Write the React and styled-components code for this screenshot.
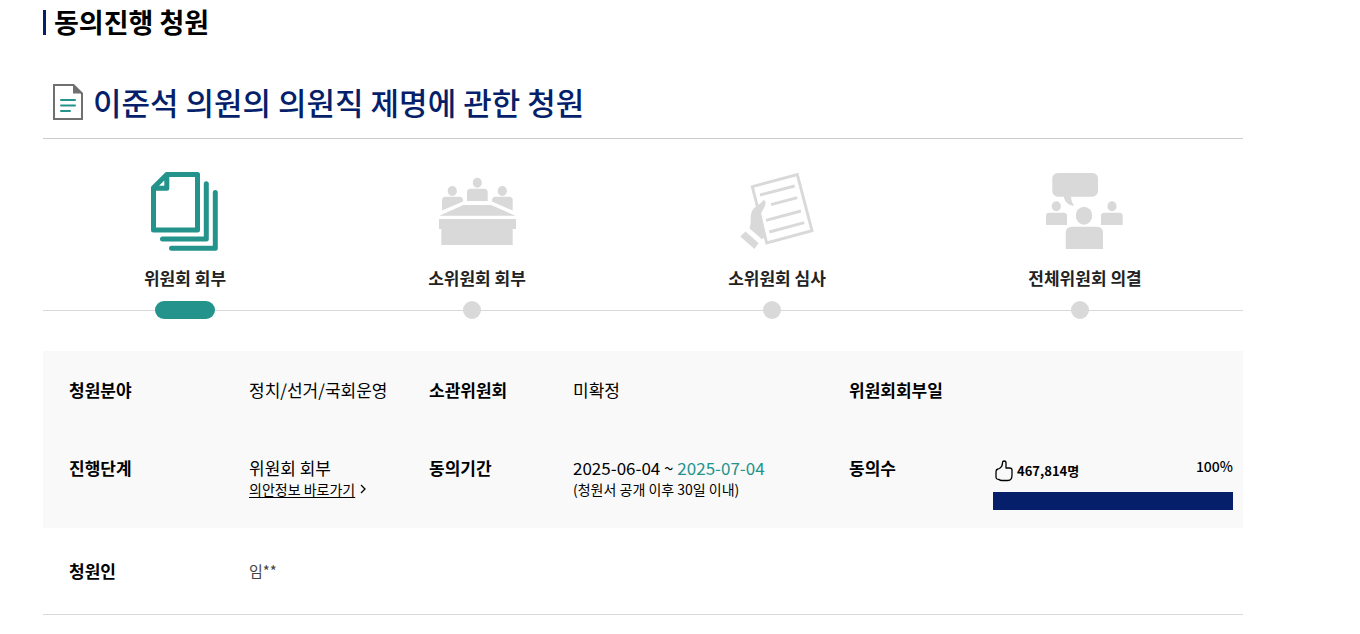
import styled, { createGlobalStyle, css } from "styled-components";

const GlobalStyle = createGlobalStyle`
    :root {
        --navy: #051f6b;
        --teal: #23938c;
        --gray: #d9d9d9;
        --panel: #f9f9f9;
    }

    * {
        box-sizing: border-box;
    }

    body {
        margin: 0;
        background-color: white;
        color: #000;
        font-family: "Noto Sans CJK KR", "Noto Sans", sans-serif;
        font-size: 17px;
        line-height: 24px;
    }
`

const Container = styled.main`
    max-width: 1200px;
    margin: 0 43px;
    padding-top: 4px;
`

const PageTitle = styled.h1`
    display: flex;
    align-items: center;
    gap: 8px;
    margin: 0;
    font-size: 27px;
    line-height: 36px;
    font-weight: 700;

    &::before {
        content: "";
        width: 3px;
        height: 25px;
        background-color: var(--navy);
    }
`

const PetitionTitle = styled.h2`
    display: flex;
    align-items: center;
    gap: 10px;
    margin: 0;
    padding: 39px 10px 13px;
    border-bottom: 1px solid #ccc;
    color: var(--navy);
    font-size: 31px;
    line-height: 46px;
    font-weight: 500;

    svg {
        flex: none;
    }
`

const Steps = styled.ol`
    display: grid;
    grid-template-columns: repeat(4, 1fr);
    margin: 0;
    padding: 32px 0 0;
    list-style: none;
    background: linear-gradient(var(--gray), var(--gray)) 0 100% / 100% 1px no-repeat;
`

const Step = styled.li`
    display: flex;
    flex-direction: column;
    align-items: center;
    padding-right: ${({ $edge }) => ($edge ? "16px" : "32px")};
    color: #222;
    font-weight: 700;

    svg {
        margin-bottom: 15px;
    }
`

const Marker = styled.span`
    width: 18px;
    height: 18px;
    margin: 11px 10px -8px 0;
    border-radius: 9px;
    background-color: var(--gray);

    ${({ $active }) => $active && css`
        width: 60px;
        margin-right: 0;
        background-color: var(--teal);
    `}
`

const InfoTable = styled.table`
    width: 100%;
    margin-top: 40px;
    border-collapse: collapse;
    table-layout: fixed;
`

const Col = styled.col`
    width: ${({ $width }) => $width};
`

const InfoRow = styled.tr`
    height: 78px;
    background-color: var(--panel);
    vertical-align: top;

    ${({ $plain }) => $plain && css`
        height: 86px;
        background-color: white;
        border-bottom: 1px solid var(--gray);
        vertical-align: middle;
    `}
`

const Label = styled.th`
    padding: 27px 10px 18px;
    text-align: left;
    vertical-align: inherit;
    font-weight: 700;

    &:first-child {
        padding-left: 26px;
    }

    ${InfoRow}:last-child & {
        padding-block: 18px;
    }
`

const Value = styled.td`
    padding: 27px 10px 18px;
    vertical-align: inherit;
    white-space: nowrap;
`

const Petitioner = styled(Value)`
    padding-block: 18px;
    color: #444;
    font-size: 15px;
`

const Note = styled.div`
    font-size: 14px;
    line-height: 18px;
`

const BillLink = styled.a`
    display: inline-flex;
    align-items: center;
    gap: 5px;
    color: inherit;
    text-decoration: none;

    span {
        text-decoration: underline;
        text-underline-offset: 2px;
    }
`

const Deadline = styled.span`
    color: var(--teal);
`

const CountRow = styled.div`
    display: flex;
    justify-content: space-between;
    font-size: 14px;
    line-height: 20px;
    font-weight: 500;
`

const Count = styled.strong`
    display: flex;
    align-items: center;
    gap: 4px;
    padding: 4px 0 0 2px;
    font-size: 13px;
    font-weight: 700;
`

const Bar = styled.div`
    height: 18px;
    margin-top: 10px;
    background-color: #e5e5e5;
`

const BarFill = styled.div`
    height: 100%;
    background-color: var(--navy);
`

const DocumentIcon = () => (
    <svg width="30" height="36" viewBox="0 0 30 36" fill="none" aria-hidden="true">
        <path d="M1 1H20.5L29 9.5V35H1Z" fill="white" stroke="#707070" strokeWidth="2" />
        <path d="M20 0L30 9.5H20Z" fill="#707070" />
        <path d="M8 16H22M8 21.5H22M8 27H17" stroke="#23938c" strokeWidth="2" strokeLinecap="round" />
    </svg>
)

const ReferIcon = () => (
    <svg width="80" height="80" viewBox="0 0 80 80" fill="none" stroke="#23938c" strokeWidth="5" strokeLinecap="round" strokeLinejoin="round" aria-hidden="true">
        <path d="M21.8 3.5H52.5V59H8.5V16.8ZM21.8 3.5V17.2H8.5" />
        <path d="M61.3 12.8V68H17.5M70.3 21.5V77.3H26.5" />
    </svg>
)

const SubcommitteeIcon = () => (
    <svg width="80" height="80" viewBox="0 0 80 80" fill="#d9d9d9" aria-hidden="true">
        <ellipse cx="40.3" cy="11.7" rx="4.5" ry="5" />
        <ellipse cx="15.3" cy="20" rx="4.6" ry="5" />
        <ellipse cx="65.3" cy="20" rx="4.6" ry="5" />
        <path d="M30 30V21.2Q30 17.7 33.5 17.7H47.2Q50.7 17.7 50.7 21.2V30Z" />
        <path d="M5 39.6V29.2Q5 25.7 8.5 25.7H22.5Q26 25.7 26 29.2V30.6Z" />
        <path d="M75.7 39.6V29.2Q75.7 25.7 72.2 25.7H58.5Q55 25.7 55 29.2V30.6Z" />
        <path d="M2.3 44.7L26.3 34H54L78.3 44.7Z" />
        <path d="M2 48H79V58H75.7V74H4.3V58H2Z" />
    </svg>
)

const ReviewIcon = () => (
    <svg width="80" height="80" viewBox="0 0 80 80" fill="none" stroke="#d9d9d9" strokeWidth="2.9" aria-hidden="true">
        <path d="M15.3 15.7L60.3 3.6L75 59.7L29.7 72Z" />
        <path d="M23 24L57.7 15M34 33.7L60.3 26.7M29 49.3L64 40M32.3 61L67.3 51.7" />
        <path d="M26.3 29.3C28.3 28.9 28.9 31.5 28.3 33.8C27.5 37 25 39.5 24.2 42.5L29 65L25 68.3L12.3 57.3C15 52 12.5 46 14.8 40.5C16.6 36.3 22.5 34 26.3 29.3Z" fill="#d9d9d9" stroke="none" />
        <path d="M8.5 60.5L21.5 72L17.5 78L3.3 65.5Z" fill="#d9d9d9" stroke="none" />
    </svg>
)

const PlenaryIcon = () => (
    <svg width="80" height="80" viewBox="0 0 80 80" fill="#d9d9d9" aria-hidden="true">
        <rect x="7.3" y="2" width="45.7" height="23.7" rx="5.5" />
        <path d="M18.7 25C19.5 31 23.5 34.7 29.3 34.7C27 32 26 29 26 25Z" />
        <ellipse cx="11.3" cy="35.3" rx="4.6" ry="5" />
        <ellipse cx="67" cy="35.3" rx="4.6" ry="5" />
        <path d="M1 54V45Q1 41.7 4.3 41.7H18.7Q22 41.7 22 45V54Z" />
        <path d="M56 54V45Q56 41.7 59.3 41.7H74.4Q77.7 41.7 77.7 45V54Z" />
        <ellipse cx="39" cy="44.7" rx="8.2" ry="9" />
        <path d="M20.7 78V62Q20.7 55.7 27 55.7H51.7Q58 55.7 58 62V78Z" />
    </svg>
)

const ThumbIcon = () => (
    <svg width="18" height="22" viewBox="0 0 18 22" fill="none" stroke="#000" strokeWidth="1.3" strokeLinejoin="round" aria-hidden="true">
        <path d="M1 11.5Q1 9.5 3 9L4.5 8.5Q7.5 6.5 7.5 3Q7.5 1 9.2 1Q11 1 11 3V8H14.5Q17 8 17 10V15Q17 20.5 13 20.5H7Q5 20.5 4 19.5Q1 19.5 1 17Z" />
    </svg>
)

const ChevronIcon = () => (
    <svg width="6" height="10" viewBox="0 0 6 10" fill="none" stroke="#000" strokeWidth="1.3" aria-hidden="true">
        <path d="M1 1L5 5L1 9" />
    </svg>
)

const steps = [
    { name: "위원회 회부", Icon: ReferIcon, active: true },
    { name: "소위원회 회부", Icon: SubcommitteeIcon },
    { name: "소위원회 심사", Icon: ReviewIcon },
    { name: "전체위원회 의결", Icon: PlenaryIcon },
]

const columns = ["196px", "15%", "12%", "23%", "12%", "auto"]

export default function App () {
    const percent = 100

    return (
        <Container>
            <GlobalStyle />
            <PageTitle>동의진행 청원</PageTitle>
            <PetitionTitle>
                <DocumentIcon />
                이준석 의원의 의원직 제명에 관한 청원
            </PetitionTitle>
            <Steps>
                {steps.map(({ name, Icon, active }, i) => (
                    <Step key={name} $edge={i === 0 || i === steps.length - 1}>
                        <Icon />
                        {name}
                        <Marker $active={active} />
                    </Step>
                ))}
            </Steps>
            <InfoTable>
                <colgroup>
                    {columns.map((width, i) => <Col key={i} $width={width} />)}
                </colgroup>
                <tbody>
                    <InfoRow>
                        <Label scope="row">청원분야</Label>
                        <Value>정치/선거/국회운영</Value>
                        <Label scope="row">소관위원회</Label>
                        <Value>미확정</Value>
                        <Label scope="row">위원회회부일</Label>
                        <Value />
                    </InfoRow>
                    <InfoRow>
                        <Label scope="row">진행단계</Label>
                        <Value>
                            위원회 회부
                            <Note>
                                <BillLink href="#bill">
                                    <span>의안정보 바로가기</span>
                                    <ChevronIcon />
                                </BillLink>
                            </Note>
                        </Value>
                        <Label scope="row">동의기간</Label>
                        <Value>
                            2025-06-04 ~ <Deadline>2025-07-04</Deadline>
                            <Note>(청원서 공개 이후 30일 이내)</Note>
                        </Value>
                        <Label scope="row">동의수</Label>
                        <Value>
                            <CountRow>
                                <Count><ThumbIcon />467,814명</Count>
                                <span>{percent}%</span>
                            </CountRow>
                            <Bar>
                                <BarFill style={{ width: `${percent}%` }} />
                            </Bar>
                        </Value>
                    </InfoRow>
                    <InfoRow $plain>
                        <Label scope="row">청원인</Label>
                        <Petitioner colSpan={5}>임**</Petitioner>
                    </InfoRow>
                </tbody>
            </InfoTable>
        </Container>
    )
}
